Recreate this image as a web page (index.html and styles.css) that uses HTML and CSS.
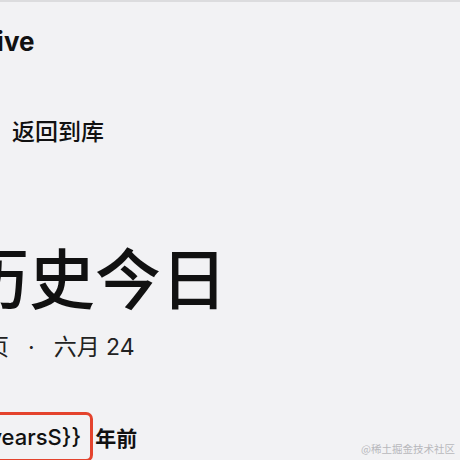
FILE: index.html
```html
<!DOCTYPE html>
<html lang="zh">
<head>
<meta charset="utf-8">
<link rel="stylesheet" href="styles.css">
</head>
<body>
<div class="page">
  <header class="nav"><h1 class="brand">Archive</h1></header>
  <a class="back">返回到库</a>
  <h2 class="title">历史今日</h2>
  <p class="meta"><span>首页</span><span class="dot">·</span><span>六月 24</span></p>
  <p class="years"><span class="var">{{yearsS}}</span><span class="ago">年前</span></p>
</div>
<div class="watermark">@稀土掘金技术社区</div>
</body>
</html>
```
FILE: styles.css
```css
html, body {
  margin: 0;
  padding: 0;
  width: 460px;
  height: 460px;
  overflow: hidden;
  background: #f2f2f4;
}
body {
  font-family: Inter, "Noto Sans CJK SC", sans-serif;
  color: #111;
  border-top: 2px solid #dcdcde;
  box-sizing: border-box;
  position: relative;
}
.page {
  display: flex;
  flex-direction: column;
  align-items: flex-start;
}
.nav {
  margin: 22px 0 0 -64px;
}
.brand {
  margin: 0;
  font-size: 26px;
  font-weight: 700;
  line-height: 36px;
}
.back {
  margin: 57px 0 0 12px;
  font-size: 23px;
  font-weight: 500;
  line-height: 30px;
  color: #111;
}
.title {
  margin: 88px 0 0 -37px;
  font-size: 66px;
  font-weight: 500;
  line-height: 80px;
  font-family: "Noto Sans CJK SC", sans-serif;
}
.meta {
  margin: 17px 0 0 -37px;
  font-size: 23px;
  line-height: 30px;
  color: #222;
  display: flex;
  gap: 17px;
}
.meta .dot { padding: 0 2px; }
.years {
  margin: 50px 0 0 -42px;
  display: flex;
  align-items: center;
  gap: 2px;
  font-size: 21px;
  font-weight: 700;
}
.var {
  border: 3px solid #e4432d;
  border-radius: 7px;
  padding: 9px 9px;
  font-size: 22px;
  font-weight: 500;
}
.watermark {
  position: absolute;
  right: 5px;
  bottom: 4px;
  font-size: 10.5px;
  color: #b8b8bc;
  font-family: "Noto Sans CJK SC", sans-serif;
}
```
